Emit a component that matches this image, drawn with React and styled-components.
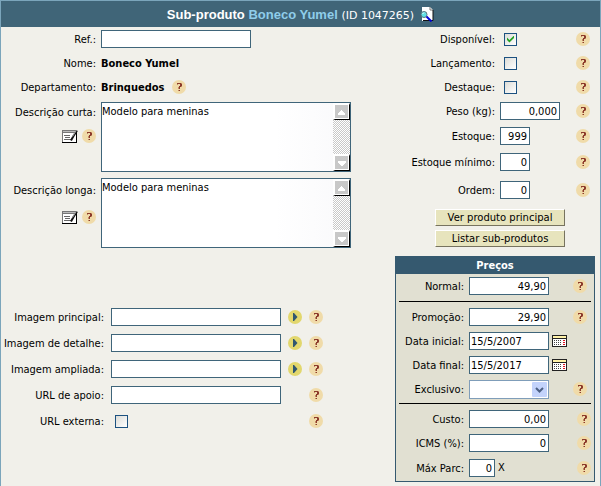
import React, { useRef } from "react";
import styled, { createGlobalStyle } from "styled-components";

const ink = "#000";
const line = "#3f657a";
const sans = `"DejaVu Sans Condensed", "Noto Sans", sans-serif`;

const Global = createGlobalStyle`
  *, *::before, *::after { box-sizing: border-box; }
  body { margin: 0; background: #f1f0ea; color: ${ink}; font: 11px/16px ${sans}; }
  button, input, select, textarea { font: inherit; color: inherit; margin: 0; }
`;

const Page = styled.main`
  min-height: 100vh;
  border: 1px solid #7ba5bb;
  border-bottom: 0;
`;

const TitleBar = styled.header`
  display: flex;
  align-items: center;
  justify-content: center;
  gap: 6px;
  height: 26px;
  background: #406578;
  color: #fff;
`;

const Title = styled.h1`
  margin: 0;
  padding-top: 2px;
  font: bold 13px/20px "Liberation Sans", Arial, sans-serif;
`;

const ProductName = styled.span`
  color: #8fcdea;
`;

const ProductId = styled.small`
  font: 11px/20px "DejaVu Sans", Verdana, sans-serif;
`;

const IconButton = styled.button`
  display: flex;
  flex: none;
  padding: 0;
  border: 0;
  background: none;
  cursor: pointer;
`;

const Columns = styled.div`
  display: grid;
  grid-template-columns: minmax(0, 1fr) 200px;
  gap: 44px;
  padding-right: 5px;
`;

const Main = styled.div`
  display: flex;
  flex-direction: column;
`;

const Side = styled.div`
  display: flex;
  flex-direction: column;
`;

const Row = styled.div`
  display: grid;
  grid-template-columns: ${(p) => p.$label}px minmax(0, 1fr);
  column-gap: 5px;
  align-items: center;
  min-height: ${(p) => p.$height || 24}px;
`;

const AreaRow = styled(Row)`
  align-items: start;
  margin-top: ${(p) => (p.$first ? 3 : 6)}px;
`;

const Label = styled.label`
  padding-top: 2px;
  text-align: right;
  white-space: nowrap;
`;

const AreaLabel = styled.div`
  display: flex;
  flex-direction: column;
  align-items: flex-end;
  gap: ${(p) => p.$gap}px;
  padding-top: ${(p) => p.$top}px;
`;

const Tools = styled.div`
  display: flex;
  align-items: center;
  gap: 4px;
`;

const Field = styled.div`
  display: flex;
  align-items: center;
  justify-content: space-between;
`;

const Value = styled.span`
  display: flex;
  align-items: center;
  gap: 8px;
  font: bold 11px/16px "DejaVu Sans Condensed", sans-serif;
`;

const ValueText = styled.span`
  padding-top: 2px;
`;

const Input = styled.input`
  width: ${(p) => p.$width || "100%"};
  height: 18px;
  padding: 0 2px 0 1px;
  border: 1px solid ${line};
  border-radius: 0;
  background: #fff;
  line-height: 16px;
  text-align: ${(p) => (p.$right ? "right" : "left")};
`;

const Check = styled.input.attrs({ type: "checkbox" })`
  appearance: none;
  display: grid;
  place-items: center;
  width: 13px;
  height: 13px;
  margin: 0 4px;
  border: 1px solid #1c5180;
  background: linear-gradient(135deg, #dcdcd7, #fff);

  &:checked::before {
    content: "";
    width: 7px;
    height: 7px;
    background: #21a121;
    clip-path: polygon(0 28%, 0 64%, 35% 100%, 100% 36%, 100% 0, 35% 64%);
  }
`;

const AreaFrame = styled.div`
  display: flex;
  height: 70px;
  border: 1px solid ${line};
  background: linear-gradient(90deg, #fff 70%, #f9f9fb);
`;

const Area = styled.textarea`
  flex: 1;
  min-width: 0;
  padding: 1px 0 0;
  border: 0;
  background: transparent;
  resize: none;
  overflow: hidden;
  line-height: 16px;
`;

const ScrollTrack = styled.div`
  display: flex;
  flex-direction: column;
  justify-content: space-between;
  width: 17px;
  background: repeating-conic-gradient(#c8c8c8 0 25%, #fff 0 50%) 0 0 / 2px 2px;
`;

const ScrollButton = styled.button`
  display: flex;
  width: 17px;
  height: 17px;
  padding: 0;
  border: solid;
  border-width: 2px 1px 1px 2px;
  border-color: #fff #000 #000 #fff;
  background: #c8c8c8;
  box-shadow: inset -1px -1px #fff;
`;

const HelpButton = styled(IconButton)`
  margin-right: ${(p) => p.$inset || 0}px;
`;

const Images = styled.section`
  display: flex;
  flex-direction: column;
  margin-top: 56px;
`;

const ImageField = styled.div`
  display: grid;
  grid-template-columns: minmax(0, 1fr) 14px 14px;
  column-gap: 7px;
  align-items: center;
  padding: 0 28px 0 2px;
`;

const HelpSlot = styled.span`
  grid-column: 3;
`;

const Actions = styled.div`
  display: flex;
  flex-direction: column;
  align-items: stretch;
  gap: 4px;
  margin: 4px 30px 9px 40px;
`;

const Action = styled.button`
  height: 17px;
  padding: 1px 0 0;
  border: 1px solid;
  border-color: #fff #77735f #77735f #fff;
  background: #e7e4bd;
  font: 10px/14px "DejaVu Sans", Verdana, sans-serif;
  white-space: nowrap;
`;

const Prices = styled.section`
  border: 1px solid #35596f;
  border-top: 0;
  background: #e1e0d2;
`;

const PricesTitle = styled.h2`
  margin: 0 -1px;
  height: 18px;
  background: #35596f;
  color: #fff;
  font: bold 11px/20px "DejaVu Sans Condensed", sans-serif;
  text-align: center;
`;

const Rule = styled.hr`
  width: calc(100% - 6px);
  height: 1px;
  margin: ${(p) => p.$top}px 3px 3px;
  border: 0;
  background: #000;
`;

const Group = styled.span`
  display: flex;
  align-items: center;
  gap: 3px;
`;

const SelectBox = styled.span`
  position: relative;
  display: block;
  width: 80px;
  height: 19px;
`;

const Select = styled.select`
  appearance: none;
  width: 100%;
  height: 100%;
  padding: 0 18px 0 2px;
  border: 1px solid #7f9db9;
  border-radius: 0;
  background: #fff;
`;

const SelectArrow = styled.svg`
  position: absolute;
  top: 2px;
  right: 2px;
  pointer-events: none;
`;

const Help = ({ inset }) => (
  <HelpButton type="button" aria-label="Ajuda" $inset={inset}>
    <svg width="14" height="14" viewBox="0 0 14 14">
      <circle cx="7" cy="7" r="7" fill="#f0dba9" />
      <g shapeRendering="crispEdges">
        <path d="M5 3h4v1H5zM8 4h2v2H8zM7 6h2v1H7zM7 7h1v2H7zM7 10h1v1H7z" fill="#8c3a2c" />
        <path d="M5 4h1v1H5zM9 3h1v1H9zM9 6h1v1H9zM6 7h1v2H6zM6 10h1v1H6z" fill="#c08a62" />
      </g>
    </svg>
  </HelpButton>
);

const Play = () => (
  <IconButton type="button" aria-label="Selecionar imagem">
    <svg width="14" height="14" viewBox="0 0 14 14">
      <circle cx="7" cy="7" r="7" fill="#e2d76d" />
      <path d="M5 3h1l3.500 4L6 11H5z" fill="#2f5670" />
    </svg>
  </IconButton>
);

const Edit = () => (
  <IconButton type="button" aria-label="Editar">
    <svg width="16" height="14" viewBox="0 0 16 14">
      <path d="M0 1h15v13H0z" fill="#000" />
      <path d="M0 1h14v12H0z" fill="#777" />
      <path d="M1 4h13v9H1z" fill="#fff" />
      <path d="M1 2h12v1H1z" fill="#bbb" />
      <path d="M2 6.500h6M3 8.500h5M2 10.500h7" stroke="#666" />
      <path d="M15 1.500L11.500 7L9 11.500" stroke="#111" strokeWidth="2" fill="none" />
      <path d="M14.500 1l-4 6.500" stroke="#aaa" />
    </svg>
  </IconButton>
);

const Preview = () => (
  <IconButton type="button" aria-label="Visualizar">
    <svg width="14" height="15" viewBox="0 0 14 15">
      <path d="M2 0h8l3 3v11H2z" fill="#fff" />
      <path d="M10 0v3h3" fill="none" stroke="#777" />
      <path d="M13 3v10.500H3" fill="none" stroke="#111" />
      <circle cx="4" cy="7.500" r="3" fill="#5fe0e6" stroke="#5a7480" />
      <path d="M2.500 7l1.500-1.500" stroke="#fff" />
      <path d="M6.500 9.500l5 5" stroke="#0000d8" strokeWidth="2" />
    </svg>
  </IconButton>
);

const Calendar = () => (
  <IconButton type="button" aria-label="Abrir calendário">
    <svg width="15" height="12" viewBox="0 0 15 12" shapeRendering="crispEdges">
      <path d="M0 0h15v12H0z" fill="#222" />
      <path d="M1 1h13v2H1z" fill="#fff2a8" />
      <path d="M1 4h13v7H1z" fill="#fff" />
      <path d="M2 5.500h8M2 7.500h8M2 9.500h8" stroke="#444" strokeDasharray="1 1" />
      <path d="M11 5.500h2M11 7.500h2M11 9.500h2" stroke="#e01020" />
    </svg>
  </IconButton>
);

function ScrollArea({ id, text }) {
  const area = useRef(null);
  const scroll = (by) => () => area.current.scrollBy({ top: by });
  return (
    <AreaFrame>
      <Area id={id} ref={area} defaultValue={text} />
      <ScrollTrack>
        <ScrollButton type="button" aria-label="Rolar para cima" onClick={scroll(-16)}>
          <svg width="14" height="14" viewBox="0 0 14 14" shapeRendering="crispEdges">
            <path d="M6 5h1v1h1v1h1v1h1v2H3V8h1V7h1V6h1z" fill="#fff" />
          </svg>
        </ScrollButton>
        <ScrollButton type="button" aria-label="Rolar para baixo" onClick={scroll(16)}>
          <svg width="14" height="14" viewBox="0 0 14 14" shapeRendering="crispEdges">
            <path d="M3 5h8v2h-1v1H9v1H8v1H6V9H5V8H4V7H3z" fill="#fff" />
          </svg>
        </ScrollButton>
      </ScrollTrack>
    </AreaFrame>
  );
}

const stock = [
  { id: "peso", label: "Peso (kg):", value: "0,000", width: "60px", height: 24 },
  { id: "estoque", label: "Estoque:", value: "999", width: "30px", height: 26 },
  { id: "minimo", label: "Estoque mínimo:", value: "0", width: "30px", height: 26 },
  { id: "ordem", label: "Ordem:", value: "0", width: "30px", height: 30 },
];

const flags = [
  { id: "disponivel", label: "Disponível:", on: true },
  { id: "lancamento", label: "Lançamento:" },
  { id: "destaque", label: "Destaque:" },
];

const images = [
  { id: "principal", label: "Imagem principal:", pick: true },
  { id: "detalhe", label: "Imagem de detalhe:", pick: true },
  { id: "ampliada", label: "Imagem ampliada:", pick: true },
  { id: "apoio", label: "URL de apoio:" },
];

const PriceRow = ({ id, label, value, inset }) => (
  <Row $label={68}>
    <Label htmlFor={id}>{label}</Label>
    <Field>
      <Input id={id} $width="80px" $right defaultValue={value} />
      <Help inset={inset} />
    </Field>
  </Row>
);

const DateRow = ({ id, label, value }) => (
  <Row $label={68}>
    <Label htmlFor={id}>{label}</Label>
    <Group>
      <Input id={id} $width="80px" defaultValue={value} />
      <Calendar />
    </Group>
  </Row>
);

export default function App() {
  return (
    <>
      <Global />
      <Page>
        <TitleBar>
          <Title>
            Sub-produto <ProductName>Boneco Yumel</ProductName> <ProductId>(ID 1047265)</ProductId>
          </Title>
          <Preview />
        </TitleBar>
        <Columns>
          <Main>
            <Row $label={95}>
              <Label htmlFor="ref">Ref.:</Label>
              <Field>
                <Input id="ref" $width="60%" />
              </Field>
            </Row>
            <Row $label={95}>
              <Label as="span">Nome:</Label>
              <Value>
                <ValueText>Boneco Yumel</ValueText>
              </Value>
            </Row>
            <Row $label={95}>
              <Label as="span">Departamento:</Label>
              <Value>
                <ValueText>Brinquedos</ValueText>
                <Help />
              </Value>
            </Row>
            <AreaRow $label={95} $first>
              <AreaLabel $top={1} $gap={8}>
                <Label htmlFor="curta">Descrição curta:</Label>
                <Tools>
                  <Edit />
                  <Help />
                </Tools>
              </AreaLabel>
              <ScrollArea id="curta" text="Modelo para meninas" />
            </AreaRow>
            <AreaRow $label={95}>
              <AreaLabel $top={3} $gap={11}>
                <Label htmlFor="longa">Descrição longa:</Label>
                <Tools>
                  <Edit />
                  <Help />
                </Tools>
              </AreaLabel>
              <ScrollArea id="longa" text="Modelo para meninas" />
            </AreaRow>
            <Images>
              {images.map((f) => (
                <Row key={f.id} $label={103} $height={26}>
                  <Label htmlFor={f.id}>{f.label}</Label>
                  <ImageField>
                    <Input id={f.id} />
                    {f.pick && <Play />}
                    <HelpSlot>
                      <Help />
                    </HelpSlot>
                  </ImageField>
                </Row>
              ))}
              <Row $label={103} $height={26}>
                <Label htmlFor="externa">URL externa:</Label>
                <ImageField>
                  <Check id="externa" />
                  <HelpSlot>
                    <Help />
                  </HelpSlot>
                </ImageField>
              </Row>
            </Images>
          </Main>
          <Side>
            {flags.map((f) => (
              <Row key={f.id} $label={100}>
                <Label htmlFor={f.id}>{f.label}</Label>
                <Field>
                  <Check id={f.id} defaultChecked={f.on} />
                  <Help inset={5} />
                </Field>
              </Row>
            ))}
            {stock.map((f) => (
              <Row key={f.id} $label={100} $height={f.height}>
                <Label htmlFor={f.id}>{f.label}</Label>
                <Field>
                  <Input id={f.id} $width={f.width} $right defaultValue={f.value} />
                  <Help inset={5} />
                </Field>
              </Row>
            ))}
            <Actions>
              <Action type="button">Ver produto principal</Action>
              <Action type="button">Listar sub-produtos</Action>
            </Actions>
            <Prices>
              <PricesTitle>Preços</PricesTitle>
              <PriceRow id="normal" label="Normal:" value="49,90" inset={7} />
              <Rule $top={3} />
              <PriceRow id="promocao" label="Promoção:" value="29,90" inset={7} />
              <DateRow id="inicial" label="Data inicial:" value="15/5/2007" />
              <DateRow id="final" label="Data final:" value="15/5/2017" />
              <Row $label={68}>
                <Label htmlFor="exclusivo">Exclusivo:</Label>
                <Field>
                  <SelectBox>
                    <Select id="exclusivo" defaultValue="">
                      <option value="" />
                    </Select>
                    <SelectArrow width="15" height="15" viewBox="0 0 15 15">
                      <rect width="15" height="15" rx="1" fill="#c3d3fb" />
                      <path d="M4 6l3.500 3.500L11 6" fill="none" stroke="#4d6185" strokeWidth="2" />
                    </SelectArrow>
                  </SelectBox>
                  <Help inset={7} />
                </Field>
              </Row>
              <Rule $top={2} />
              <PriceRow id="custo" label="Custo:" value="0,00" inset={3} />
              <PriceRow id="icms" label="ICMS (%):" value="0" inset={3} />
              <Row $label={68} $height={26}>
                <Label htmlFor="parc">Máx Parc:</Label>
                <Field>
                  <Group>
                    <Input id="parc" $width="26px" $right defaultValue="0" />
                    <span>X</span>
                  </Group>
                  <Help inset={3} />
                </Field>
              </Row>
            </Prices>
          </Side>
        </Columns>
      </Page>
    </>
  );
}
